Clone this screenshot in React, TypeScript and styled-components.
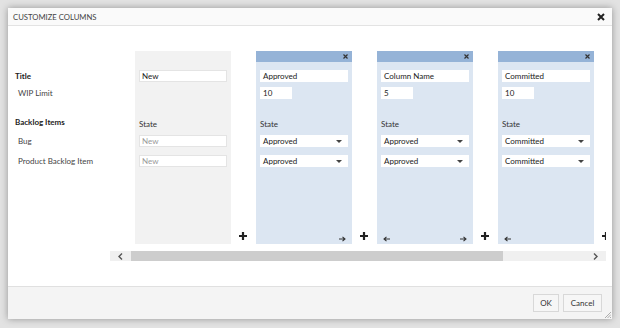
import React from "react";
import styled, { createGlobalStyle } from "styled-components";

const GlobalStyle = createGlobalStyle`
  body {
    margin: 0;
    background: #e2e2e2;
    font-family: Lato, "Open Sans", sans-serif;
    color: #333;
  }
`;

const Page = styled.div`
  width: 620px;
  height: 328px;
  padding: 8px 0 0 8px;
  box-sizing: border-box;
`;

const Dialog = styled.div`
  width: 604px;
  height: 311px;
  background: #fff;
  box-shadow: 0 0 7px rgba(0, 0, 0, 0.35);
  display: flex;
  flex-direction: column;
  position: relative;
`;

const TitleBar = styled.div`
  height: 17px;
  display: flex;
  align-items: center;
  justify-content: space-between;
  padding: 0 7px 0 5px;
  background: #fafafa;
  border-bottom: 1px solid #e3e3e3;
`;

const Title = styled.span`
  font-size: 7.7px;
  color: #444;
`;

const Body = styled.div`
  flex: 1;
  display: flex;
  padding-top: 25px;
`;

const Labels = styled.div`
  width: 102px;
  padding: 19px 0 0 7px;
  box-sizing: border-box;
  display: flex;
  flex-direction: column;
`;

const Row = styled.div<{ $h: number; $mb: number }>`
  height: ${(p) => p.$h}px;
  margin-bottom: ${(p) => p.$mb}px;
  display: flex;
  align-items: center;
  font-size: 8px;
  white-space: nowrap;
`;

const Label = styled.span<{ $bold?: boolean }>`
  font-weight: ${(p) => (p.$bold ? 700 : 400)};
  padding-left: ${(p) => (p.$bold ? 0 : 3)}px;
  color: ${(p) => (p.$bold ? "#222" : "#444")};
`;

const ScrollArea = styled.div`
  width: 496px;
  display: flex;
  flex-direction: column;
  gap: 7px;
`;

const Track = styled.div`
  height: 193px;
  overflow: hidden;
  display: flex;
  padding-left: 25px;
`;

const Column = styled.div<{ $blue?: boolean }>`
  flex: 0 0 96px;
  background: ${(p) => (p.$blue ? "#dce6f2" : "#f2f2f2")};
  display: flex;
  flex-direction: column;
`;

const ColHeader = styled.div<{ $blue?: boolean }>`
  height: 11px;
  background: ${(p) => (p.$blue ? "#95b3d7" : "transparent")};
  display: flex;
  align-items: center;
  justify-content: flex-end;
  padding-right: 4px;
`;

const ColContent = styled.div`
  padding: 8px 4px 0;
  display: flex;
  flex-direction: column;
`;

const Input = styled.div<{ $w?: number; $muted?: boolean; $border?: boolean }>`
  width: ${(p) => p.$w ?? 88}px;
  height: 12px;
  box-sizing: border-box;
  background: #fff;
  border: 1px solid ${(p) => (p.$border ? "#e4e4e4" : "#fff")};
  font-size: 8px;
  padding: 0 2px;
  display: flex;
  align-items: center;
  justify-content: space-between;
  color: ${(p) => (p.$muted ? "#9a9a9a" : "#222")};
`;

const Caret = styled.span`
  width: 0;
  height: 0;
  border-left: 3px solid transparent;
  border-right: 3px solid transparent;
  border-top: 3px solid #444;
  margin-right: 3px;
`;

const ColFooter = styled.div`
  margin-top: auto;
  height: 17px;
  padding: 0 6px 0 6px;
  display: flex;
  align-items: center;
  justify-content: space-between;
`;

const Gutter = styled.div`
  flex: 0 0 25px;
  display: flex;
  align-items: flex-end;
  justify-content: center;
  padding: 0 2px 4px 0;
  box-sizing: border-box;
`;

const ScrollBar = styled.div`
  height: 10px;
  background: #f0f0f0;
  display: flex;
  align-items: center;
`;

const ScrollButton = styled.div`
  width: 21px;
  height: 10px;
  display: flex;
  align-items: center;
  justify-content: center;
`;

const Thumb = styled.div`
  width: 372px;
  height: 10px;
  background: #cdcdcd;
`;

const Footer = styled.div`
  height: 33px;
  background: #f4f4f4;
  border-top: 1px solid #e0e0e0;
  box-sizing: border-box;
  display: flex;
  align-items: center;
  justify-content: flex-end;
  gap: 4px;
  padding: 0 10px 0 0;
`;

const Button = styled.div<{ $w: number }>`
  width: ${(p) => p.$w}px;
  height: 18px;
  box-sizing: border-box;
  border: 1px solid #d8d8d8;
  background: #f6f6f6;
  font-size: 8px;
  color: #333;
  display: flex;
  align-items: center;
  justify-content: center;
`;

const Grip = styled.svg`
  position: absolute;
  right: 1px;
  bottom: 1px;
`;

const Close = () => (
  <svg width="8" height="8" viewBox="0 0 8 8">
    <path d="M1 1L7 7M7 1L1 7" stroke="#222" strokeWidth="2" />
  </svg>
);

const SmallX = () => (
  <svg width="5" height="5" viewBox="0 0 5 5">
    <path d="M0.5 0.5L4.5 4.5M4.5 0.5L0.5 4.5" stroke="#333" strokeWidth="1.2" />
  </svg>
);

const Plus = () => (
  <svg width="8" height="8" viewBox="0 0 8 8">
    <path d="M4 0V8M0 4H8" stroke="#222" strokeWidth="2.2" />
  </svg>
);

const Arrow = ({ left }: { left?: boolean }) => (
  <svg width="7" height="6" viewBox="0 0 7 6" style={left ? { transform: "scaleX(-1)" } : undefined}>
    <path d="M0 3H6M3.5 0.8L6 3L3.5 5.2" stroke="#333" strokeWidth="1.1" fill="none" />
  </svg>
);

const Chevron = ({ left }: { left?: boolean }) => (
  <svg width="5" height="7" viewBox="0 0 5 7">
    <path d={left ? "M4 0.5L1 3.5L4 6.5" : "M1 0.5L4 3.5L1 6.5"} stroke="#555" strokeWidth="1.4" fill="none" />
  </svg>
);

type Col = {
  name: string;
  wip?: string;
  states: string[];
  back?: boolean;
  forward?: boolean;
};

const columns: Col[] = [
  { name: "Approved", wip: "10", states: ["Approved", "Approved"], forward: true },
  { name: "Column Name", wip: "5", states: ["Approved", "Approved"], back: true, forward: true },
  { name: "Committed", wip: "10", states: ["Committed", "Committed"], back: true },
];

function App() {
  return (
    <Page>
      <GlobalStyle />
      <Dialog>
        <TitleBar>
          <Title>CUSTOMIZE COLUMNS</Title>
          <Close />
        </TitleBar>
        <Body>
          <Labels>
            <Row $h={12} $mb={5}>
              <Label $bold>Title</Label>
            </Row>
            <Row $h={12} $mb={18}>
              <Label>WIP Limit</Label>
            </Row>
            <Row $h={10} $mb={8}>
              <Label $bold>Backlog Items</Label>
            </Row>
            <Row $h={12} $mb={8}>
              <Label>Bug</Label>
            </Row>
            <Row $h={12} $mb={0}>
              <Label>Product Backlog Item</Label>
            </Row>
          </Labels>
          <ScrollArea>
            <Track>
              <Column>
                <ColHeader />
                <ColContent>
                  <Row $h={12} $mb={5}>
                    <Input $border>New</Input>
                  </Row>
                  <Row $h={12} $mb={20} />
                  <Row $h={10} $mb={6}>State</Row>
                  <Row $h={12} $mb={8}>
                    <Input $border $muted>New</Input>
                  </Row>
                  <Row $h={12} $mb={0}>
                    <Input $border $muted>New</Input>
                  </Row>
                </ColContent>
              </Column>
              {columns.map((c) => (
                <React.Fragment key={c.name}>
                  <Gutter>
                    <Plus />
                  </Gutter>
                  <Column $blue>
                    <ColHeader $blue>
                      <SmallX />
                    </ColHeader>
                    <ColContent>
                      <Row $h={12} $mb={5}>
                        <Input>{c.name}</Input>
                      </Row>
                      <Row $h={12} $mb={20}>
                        <Input $w={32}>{c.wip}</Input>
                      </Row>
                      <Row $h={10} $mb={6}>State</Row>
                      {c.states.map((s, i) => (
                        <Row key={i} $h={12} $mb={i === 0 ? 8 : 0}>
                          <Input>
                            {s}
                            <Caret />
                          </Input>
                        </Row>
                      ))}
                    </ColContent>
                    <ColFooter>
                      <span>{c.back && <Arrow left />}</span>
                      <span>{c.forward && <Arrow />}</span>
                    </ColFooter>
                  </Column>
                </React.Fragment>
              ))}
              <Gutter>
                <Plus />
              </Gutter>
            </Track>
            <ScrollBar>
              <ScrollButton>
                <Chevron left />
              </ScrollButton>
              <Thumb />
              <div style={{ flex: 1 }} />
              <ScrollButton>
                <Chevron />
              </ScrollButton>
            </ScrollBar>
          </ScrollArea>
        </Body>
        <Footer>
          <Button $w={26}>OK</Button>
          <Button $w={39}>Cancel</Button>
        </Footer>
        <Grip width="6" height="6" viewBox="0 0 6 6">
          <path d="M6 0L0 6M6 2.5L2.5 6M6 5L5 6" stroke="#999" strokeWidth="0.8" />
        </Grip>
      </Dialog>
    </Page>
  );
}

export default App;
